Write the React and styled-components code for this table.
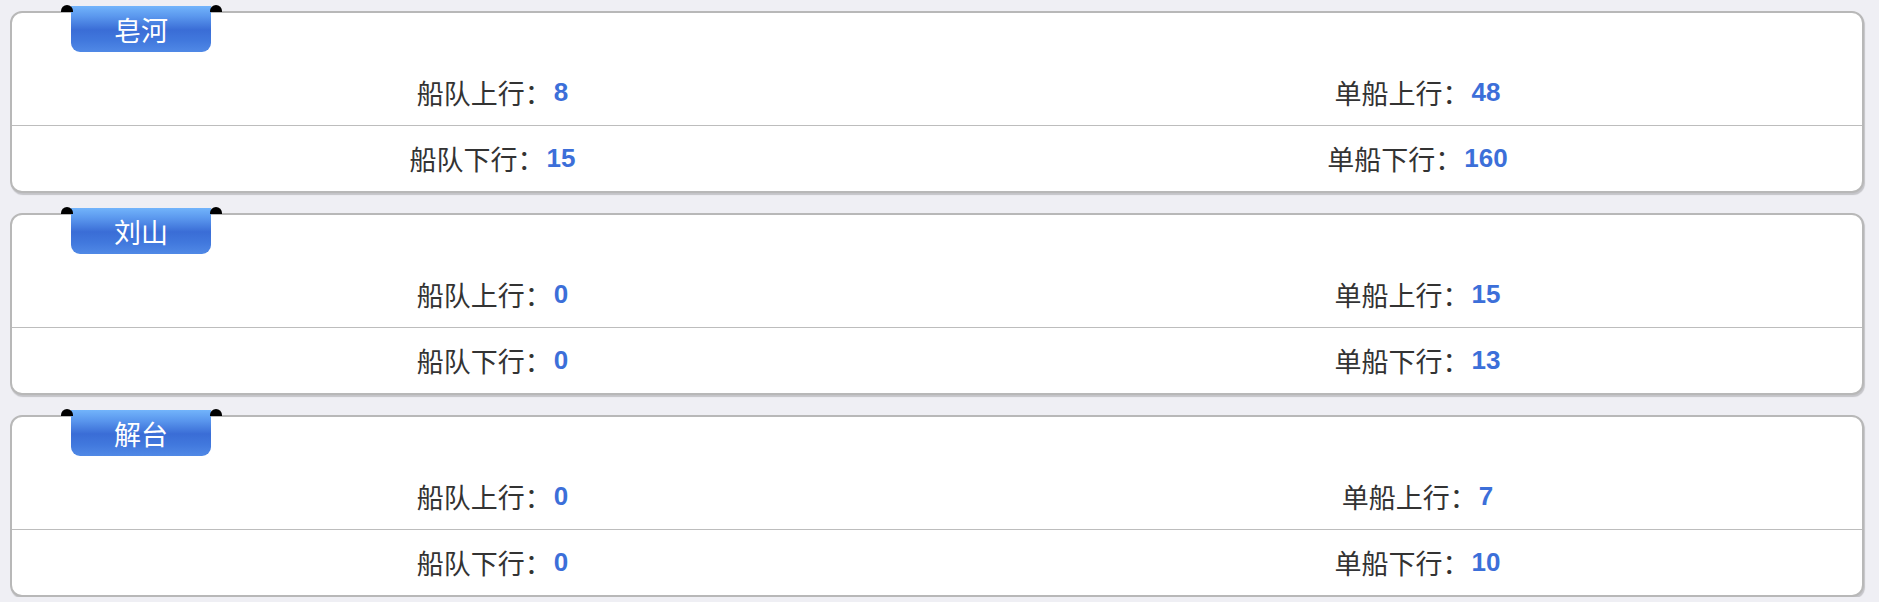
import React from 'react';
import styled, { createGlobalStyle } from 'styled-components';

const GlobalStyle = createGlobalStyle`
  html, body {
    margin: 0;
    padding: 0;
    background: #efeff4;
  }
  body {
    font-family: "Noto Sans CJK SC", "Liberation Sans", sans-serif;
  }
`;

const Page = styled.div`
  display: flex;
  flex-direction: column;
  gap: 20px;
  padding: 11px 15px 0 10px;
`;

const Card = styled.section`
  background: #fff;
  border: 2px solid #b8b8b8;
  border-radius: 12px;
  box-shadow: 1px 2px 1px rgba(0, 0, 0, 0.18);
`;

const Header = styled.div`
  display: flex;
  height: 47px;
`;

const Tab = styled.div`
  position: relative;
  width: 140px;
  height: 46px;
  margin: -7px 0 0 59px;
  border-radius: 0 0 9px 9px;
  background: linear-gradient(#72b4fb 0%, #5b98ee 22%, #3a6dd6 52%, #4178dd 75%, #5089e6 100%);
  color: #fff;
  font-size: 27px;
  line-height: 48px;
  text-align: center;

  &::before,
  &::after {
    content: '';
    position: absolute;
    top: -1px;
    width: 12px;
    height: 7px;
    background: #000;
    border-radius: 60% 60% 0 0 / 100% 100% 0 0;
  }
  &::before { left: -10px; }
  &::after { right: -11px; }
`;

const Row = styled.div`
  display: grid;
  grid-template-columns: 1fr 1fr;
  height: ${(p) => p.$h}px;
  border-top: ${(p) => (p.$divided ? '1px solid #bdbdbd' : 'none')};
`;

const Cell = styled.div`
  display: flex;
  align-items: center;
  justify-content: center;
  padding-left: 36px;
`;

const Label = styled.span`
  color: #333;
  font-size: 27px;
  font-family: "Noto Sans CJK SC", sans-serif;
`;

const Value = styled.span`
  color: #3c6fd9;
  font-size: 26px;
  font-weight: bold;
  font-family: "Liberation Sans", Arial, sans-serif;
  margin-left: 2px;
`;

const stations = [
  { name: '皂河', fleetUp: 8, shipUp: 48, fleetDown: 15, shipDown: 160 },
  { name: '刘山', fleetUp: 0, shipUp: 15, fleetDown: 0, shipDown: 13 },
  { name: '解台', fleetUp: 0, shipUp: 7, fleetDown: 0, shipDown: 10 },
];

const Stat = ({ label, value }) => (
  <Cell>
    <Label>{label}：</Label>
    <Value>{value}</Value>
  </Cell>
);

const App = () => (
  <>
    <GlobalStyle />
    <Page>
      {stations.map((s) => (
        <Card key={s.name}>
          <Header>
            <Tab>{s.name}</Tab>
          </Header>
          <Row $h={65}>
            <Stat label="船队上行" value={s.fleetUp} />
            <Stat label="单船上行" value={s.shipUp} />
          </Row>
          <Row $h={65} $divided>
            <Stat label="船队下行" value={s.fleetDown} />
            <Stat label="单船下行" value={s.shipDown} />
          </Row>
        </Card>
      ))}
    </Page>
  </>
);

export default App;
